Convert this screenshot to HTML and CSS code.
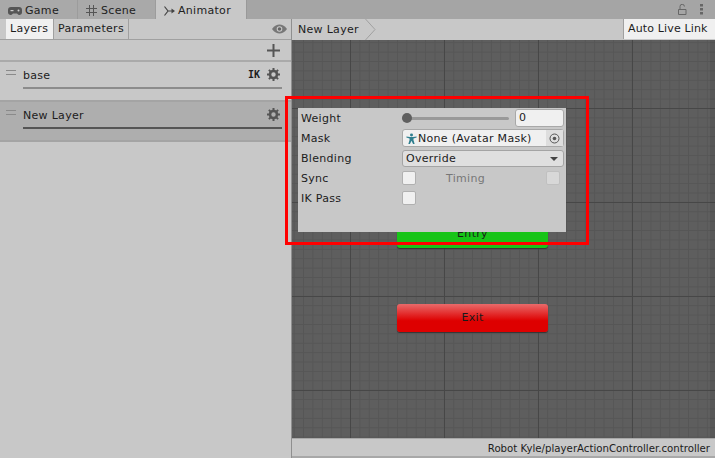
FILE: index.html
```html
<!DOCTYPE html>
<html lang="en">
<head>
<meta charset="UTF-8">
<title>Animator</title>
<link rel="stylesheet" href="styles.css">
</head>
<body>
<div class="window">
  <div class="tabbar">
    <div class="tab tab-game">
      <svg class="tab-icon" width="14" height="10" viewBox="0 0 14 10"><path d="M3 1h8a3 3 0 0 1 3 3v2.500a2.500 2.500 0 0 1-4.500 1.500L9 7.500H5L4.500 8A2.500 2.500 0 0 1 0 6.500V4a3 3 0 0 1 3-3z" fill="#555"/><rect x="2.500" y="4" width="3" height="1.200" fill="#ccc"/><circle cx="10.500" cy="4.500" r="1" fill="#ccc"/></svg>
      Game
    </div>
    <div class="tab tab-scene">
      <svg class="tab-icon" width="11" height="11" viewBox="0 0 11 11"><path d="M3.500 0v11M7.500 0v11M0 3.500h11M0 7.500h11" stroke="#555" fill="none"/></svg>
      Scene
    </div>
    <div class="tab tab-animator">
      <svg class="tab-icon" width="11" height="10" viewBox="0 0 11 10"><path d="M0.500 0.500L4 5L0.500 9.500M4 5h4" stroke="#444" stroke-width="1.200" fill="none"/><path d="M7.500 2.500l3.500 2.500-3.500 2.500z" fill="#444"/></svg>
      Animator
    </div>
    <div class="tab-tools">
      <svg width="9" height="11" viewBox="0 0 9 11"><path d="M2 5V2.500a2.200 2.200 0 0 1 4.400 0M.5 5.500h7.500v5H.5z" stroke="#666" fill="none"/></svg>
      <svg width="3" height="11" viewBox="0 0 3 11"><path d="M0 0h3v2.500H0zM0 4h3v2.500H0zM0 8h3v2.500H0z" fill="#666"/></svg>
    </div>
  </div>

  <div class="main">
    <div class="side">
      <div class="side-tabs">
        <div class="side-tab side-tab-on">Layers</div>
        <div class="side-tab side-tab-params">Parameters</div>
        <svg class="eye" width="15" height="10" viewBox="0 0 15 10"><path d="M0 5C2.500 1.500 5 0.500 7.500 0.500S12.500 1.500 15 5C12.500 8.500 10 9.500 7.500 9.500S2.500 8.500 0 5z" fill="#777"/><circle cx="7.500" cy="5" r="2.800" fill="#ccc"/><circle cx="7.500" cy="5" r="1.800" fill="#666"/></svg>
      </div>
      <div class="add-row">
        <svg width="13" height="13" viewBox="0 0 13 13"><path d="M6.500 0v13M0 6.500h13" stroke="#555" stroke-width="2" fill="none"/></svg>
      </div>
      <div class="layer">
        <div class="handle"></div>
        <div class="layer-body">
          <div class="layer-top">
            <span class="layer-name">base</span>
            <span class="ik">IK</span>
            <svg class="gear" width="13" height="13" viewBox="0 0 13 13"><circle cx="6.500" cy="6.500" r="3.500" fill="none" stroke="#555" stroke-width="2.600"/><path d="M6.500 0v13M0 6.500h13M1.900 1.900l9.200 9.200M11.100 1.900l-9.200 9.200" stroke="#555" stroke-width="2" fill="none" stroke-dasharray="2.400 8.200"/></svg>
          </div>
          <div class="layer-bar"></div>
        </div>
      </div>
      <div class="layer layer-on">
        <div class="handle"></div>
        <div class="layer-body">
          <div class="layer-top">
            <span class="layer-name">New Layer</span>
            <svg class="gear" width="13" height="13" viewBox="0 0 13 13"><circle cx="6.500" cy="6.500" r="3.500" fill="none" stroke="#555" stroke-width="2.600"/><path d="M6.500 0v13M0 6.500h13M1.900 1.900l9.200 9.200M11.100 1.900l-9.200 9.200" stroke="#555" stroke-width="2" fill="none" stroke-dasharray="2.400 8.200"/></svg>
          </div>
          <div class="layer-bar"></div>
        </div>
      </div>
    </div>

    <div class="right">
      <div class="crumbs">
        <div class="crumb">New Layer
          <svg class="crumb-arrow" width="11" height="21" viewBox="0 0 11 21"><path d="M0.500 0L10 10.500L0.500 21" stroke="#a0a0a0" fill="none"/></svg>
        </div>
        <div class="live-link">Auto Live Link</div>
      </div>
      <div class="graph">
        <div class="node node-entry">Entry</div>
        <div class="node node-exit">Exit</div>
      </div>
      <div class="status">Robot Kyle/playerActionController.controller</div>
    </div>
  </div>

  <div class="popup">
    <div class="field">Weight</div>
    <div class="control">
      <div class="slider"><div class="thumb"></div></div>
      <div class="num">0</div>
    </div>
    <div class="field">Mask</div>
    <div class="control">
      <div class="objfield">
        <svg width="11" height="11" viewBox="0 0 14 14"><circle cx="7" cy="2.500" r="1.900" fill="#2f7f8f"/><path d="M0.500 4.500L5 5h4l4.500-.5v1.200L9.500 7v2l1.500 5H9L7 10l-2 4H3l1.500-5V7L.5 5.700z" fill="#2f7f8f"/></svg>
        <span class="obj-text">None (Avatar Mask)</span>
        <span class="picker"><svg width="11" height="11" viewBox="0 0 11 11"><circle cx="5.500" cy="5.500" r="4.500" stroke="#555" fill="none"/><circle cx="5.500" cy="5.500" r="1.800" fill="#555"/></svg></span>
      </div>
    </div>
    <div class="field">Blending</div>
    <div class="control">
      <div class="dropdown">Override <span class="caret"></span></div>
    </div>
    <div class="field">Sync</div>
    <div class="control">
      <div class="check"></div>
      <span class="timing">Timing</span>
      <div class="check check-off"></div>
    </div>
    <div class="field">IK Pass</div>
    <div class="control">
      <div class="check"></div>
    </div>
  </div>
  <div class="redbox"></div>
</div>
</body>
</html>
```

FILE: styles.css
```css
html, body { margin: 0; padding: 0; }
body { font-family: "DejaVu Sans", sans-serif; font-size: 11px; letter-spacing: 0.3px; color: #1c1c1c; background: #c8c8c8; }
.window { position: relative; width: 715px; height: 458px; overflow: hidden; }

.tabbar { display: flex; height: 19px; background: #a5a5a5; align-items: stretch; }
.tab { display: flex; align-items: center; gap: 3px; box-sizing: border-box; color: #222; padding-top: 2px; }
.tab-game { width: 77px; padding-left: 8px; background: #a9a9a9; }
.tab-scene { width: 78px; padding-left: 8px; gap: 4px; background: #a9a9a9; border-left: 1px solid #9c9c9c; }
.tab-animator { width: 92px; padding-left: 8px; background: #c8c8c8; border-left: 1px solid #9c9c9c; border-right: 1px solid #999; }
.tab-icon { flex: none; }
.tab-tools { margin-left: auto; display: flex; align-items: center; gap: 13px; padding-right: 12px; }

.main { display: flex; height: 439px; }

.side { width: 291px; flex: none; background: #c8c8c8; border-right: 1px solid #8f8f8f; }
.side-tabs { display: flex; height: 20px; padding-left: 6px; border-bottom: 1px solid #a0a0a0; position: relative; }
.side-tab { box-sizing: border-box; padding-left: 4px; line-height: 20px; border-right: 1px solid #a0a0a0; }
.side-tab-on { background: #f0f0f0; width: 48px; }
.side-tab-params { width: 75px; }
.eye { position: absolute; right: 4px; top: 5px; }
.add-row { height: 20px; display: flex; align-items: center; justify-content: flex-end; padding-right: 11px; border-bottom: 2px solid #aaa; }
.layer { display: flex; box-sizing: border-box; height: 40px; border-bottom: 2px solid #a4a4a4; }
.layer-on { background: #aeaeae; }
.handle { width: 10px; height: 3px; margin: 8px 7px 0 6px; border-top: 1px solid #8a8a8a; border-bottom: 1px solid #8a8a8a; }
.layer-body { width: 259px; }
.layer-top { display: flex; align-items: center; height: 25px; }
.layer-name { flex: 1; padding-top: 2px; }
.ik { font-family: "DejaVu Sans Mono", monospace; font-weight: bold; font-size: 10px; letter-spacing: 0; margin-right: 7px; }
.gear { margin-right: 2px; }
.layer-bar { height: 2px; background: #8c8c8c; }
.layer-on .layer-bar { background: #555; }

.right { flex: 1; display: flex; flex-direction: column; }
.crumbs { display: flex; height: 21px; justify-content: space-between; }
.crumb { display: flex; align-items: center; padding-left: 6px; position: relative; width: 70px; }
.crumb-arrow { position: absolute; left: 73px; top: 0; }
.live-link { width: 92px; height: 20px; background: #f0f0f0; border-left: 1px solid #a0a0a0; line-height: 20px; padding-left: 4px; box-sizing: border-box; letter-spacing: 0.15px; }

.graph {
  position: relative;
  flex: 1;
  background-color: #5e5e5e;
  background-image:
    linear-gradient(to right, #474747 1px, transparent 1px),
    linear-gradient(to bottom, #474747 1px, transparent 1px),
    linear-gradient(to right, #565656 1px, transparent 1px),
    linear-gradient(to bottom, #565656 1px, transparent 1px);
  background-size: 94px 94px, 94px 94px, 9.4px 9.4px, 9.4px 9.4px;
  background-position: 58px 68px, 58px 68px, 58px 68px, 58px 68px;
  box-shadow: inset -5px 0 0 rgba(0, 0, 0, 0.07);
}
.node { position: absolute; left: 105px; width: 151px; height: 28px; box-sizing: border-box; border-radius: 3px; text-align: center; line-height: 27px; color: #1a1a1a; box-shadow: 0 1px 1px #333; }
.node-entry { top: 180px; background: #18c418; }
.node-exit { top: 264px; background: linear-gradient(#e96a6a, #de0000 60%); }

.status { height: 20px; box-sizing: border-box; background: #c8c8c8; border-bottom: 2px solid #a8a8a8; border-top: 1px solid #a8a8a8; text-align: right; padding-right: 5px; line-height: 19px; font-size: 10.2px; letter-spacing: 0; }

.popup { position: absolute; left: 298px; top: 108px; width: 268px; height: 124px; box-sizing: border-box; background: #c8c8c8; padding: 0 2px 0 3px; display: grid; grid-template-columns: 101px 1fr; grid-auto-rows: 20px; }
.field { line-height: 20px; padding-top: 1px; }
.control { display: flex; align-items: center; }
.slider { position: relative; width: 107px; height: 3px; background: #999; border-radius: 2px; margin-right: 6px; }
.thumb { position: absolute; left: 0; top: -4px; width: 10px; height: 10px; border-radius: 50%; background: #5f5f5f; }
.num { flex: 1; height: 18px; box-sizing: border-box; background: #f0f0f0; border: 1px solid #a8a8a8; border-radius: 3px; line-height: 16px; padding-left: 3px; }
.objfield { flex: 1; display: flex; align-items: center; height: 18px; box-sizing: border-box; background: #f0f0f0; border: 1px solid #a8a8a8; border-radius: 3px; padding-left: 3px; }
.obj-text { flex: 1; margin-left: 1px; }
.picker { width: 17px; height: 16px; background: #dedede; display: flex; align-items: center; justify-content: center; }
.dropdown { flex: 1; position: relative; height: 17px; box-sizing: border-box; background: #dfdfdf; border: 1px solid #a4a4a4; border-radius: 3px; line-height: 15px; padding-left: 3px; }
.caret { position: absolute; right: 5px; top: 6px; border: 4px solid transparent; border-top: 4px solid #444; border-bottom: 0; }
.check { width: 14px; height: 14px; box-sizing: border-box; background: #f0f0f0; border: 1px solid #b0b0b0; border-radius: 2px; }
.check-off { background: #d8d8d8; border-color: #c0c0c0; margin-left: 61px; }
.timing { color: #777; margin-left: 30px; }

.redbox { position: absolute; left: 285px; top: 96px; width: 304px; height: 149px; box-sizing: border-box; border: 3px solid #f00; }
```
